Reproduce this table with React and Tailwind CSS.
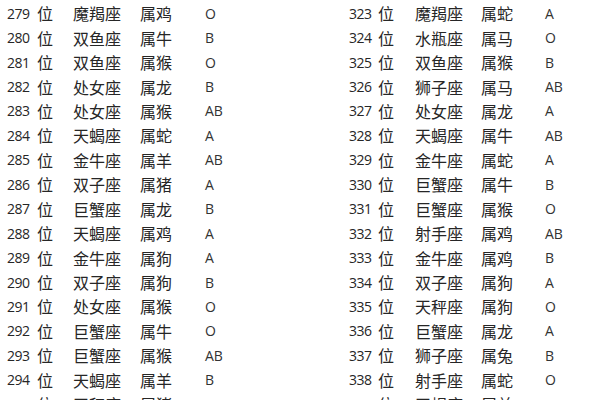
import React from "react";

const left = [
  ["279", "魔羯座", "属鸡", "O"],
  ["280", "双鱼座", "属牛", "B"],
  ["281", "双鱼座", "属猴", "O"],
  ["282", "处女座", "属龙", "B"],
  ["283", "处女座", "属猴", "AB"],
  ["284", "天蝎座", "属蛇", "A"],
  ["285", "金牛座", "属羊", "AB"],
  ["286", "双子座", "属猪", "A"],
  ["287", "巨蟹座", "属龙", "B"],
  ["288", "天蝎座", "属鸡", "A"],
  ["289", "金牛座", "属狗", "A"],
  ["290", "双子座", "属狗", "B"],
  ["291", "处女座", "属猴", "O"],
  ["292", "巨蟹座", "属牛", "O"],
  ["293", "巨蟹座", "属猴", "AB"],
  ["294", "天蝎座", "属羊", "B"],
  ["295", "天秤座", "属猪", "A"],
];

const right = [
  ["323", "魔羯座", "属蛇", "A"],
  ["324", "水瓶座", "属马", "O"],
  ["325", "双鱼座", "属猴", "B"],
  ["326", "狮子座", "属马", "AB"],
  ["327", "处女座", "属龙", "A"],
  ["328", "天蝎座", "属牛", "AB"],
  ["329", "金牛座", "属蛇", "A"],
  ["330", "巨蟹座", "属牛", "B"],
  ["331", "巨蟹座", "属猴", "O"],
  ["332", "射手座", "属鸡", "AB"],
  ["333", "金牛座", "属鸡", "B"],
  ["334", "双子座", "属狗", "A"],
  ["335", "天秤座", "属狗", "O"],
  ["336", "巨蟹座", "属龙", "A"],
  ["337", "狮子座", "属兔", "B"],
  ["338", "射手座", "属蛇", "O"],
  ["339", "天蝎座", "属羊", "A"],
];

const cjk = { fontFamily: '"Noto Sans CJK SC", sans-serif' };
const latin = { fontFamily: '"Open Sans", "Noto Sans CJK SC", sans-serif' };

function Column({ rows, cols, className }) {
  return (
    <div className={className}>
      {rows.map((r) => (
        <div key={r[0]} className={`grid ${cols} h-[24.45px] items-center text-[#262626]`}>
          <span className="text-[14px] tracking-[-0.5px]" style={latin}>{r[0]}</span>
          <span className="text-[16px]" style={cjk}>位</span>
          <span className="text-[16px]" style={cjk}>{r[1]}</span>
          <span className="text-[16px]" style={cjk}>{r[2]}</span>
          <span className="text-[14px] text-[#333]" style={latin}>{r[3]}</span>
        </div>
      ))}
    </div>
  );
}

export default function App() {
  return (
    <div className="w-[600px] h-[400px] overflow-hidden bg-white flex pt-px">
      <Column
        rows={left}
        cols="grid-cols-[30px_36px_67px_65px_1fr]"
        className="w-[349px] pl-[7px]"
      />
      <Column
        rows={right}
        cols="grid-cols-[29px_37px_66px_64px_1fr]"
        className="flex-1"
      />
    </div>
  );
}
